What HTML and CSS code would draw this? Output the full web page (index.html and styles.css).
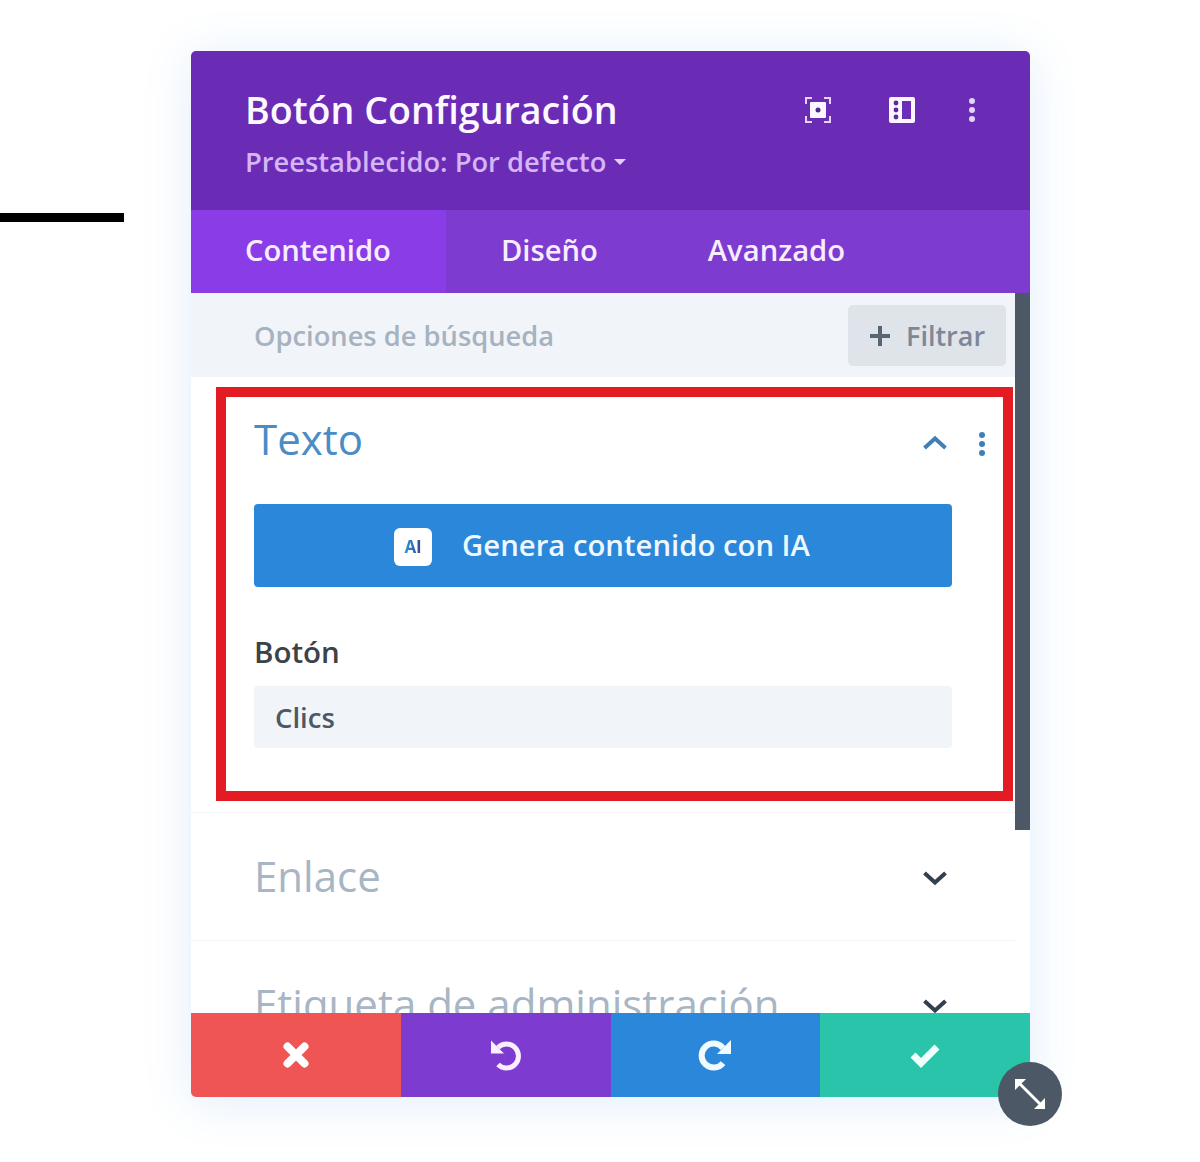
FILE: index.html
```html
<!DOCTYPE html>
<html lang="es">
<head>
    <meta charset="UTF-8">
    <meta name="viewport" content="width=device-width, initial-scale=1.0">
    <title>Botón Configuración</title>
    <link rel="stylesheet" href="styles.css">
</head>
<body>
    <div class="page">
        <div class="rule"></div>
        <div class="panel">
            <div class="panel-header">
                <div class="panel-titles">
                    <h2>Botón Configuración</h2>
                    <div class="preset">Preestablecido: Por defecto <span class="caret"></span></div>
                </div>
                <div class="header-icons">
                    <svg class="icon-focus" width="28" height="28" viewBox="0 0 28 28">
                        <path d="M2 8V2h6M20 2h6v6M26 20v6h-6M8 26H2v-6" fill="none" stroke="#e6d2fa" stroke-width="2"/>
                        <rect x="6" y="6" width="16" height="16" rx="1" fill="#fbf6ff"/>
                        <circle cx="14" cy="14" r="2.500" fill="#4d2a86"/>
                    </svg>
                    <svg class="icon-layout" width="26" height="26" viewBox="0 0 26 26">
                        <rect width="26" height="26" rx="2" fill="#fbf6ff"/>
                        <circle cx="7" cy="6" r="2.400" fill="#5b2a99"/>
                        <circle cx="7" cy="13" r="2.400" fill="#5b2a99"/>
                        <circle cx="7" cy="20" r="2.400" fill="#5b2a99"/>
                        <rect x="13" y="4" width="9" height="18" fill="#6c2eb9"/>
                    </svg>
                    <svg class="icon-dots" width="8" height="26" viewBox="0 0 8 26">
                        <circle cx="4" cy="4" r="3" fill="#e6d2fa"/>
                        <circle cx="4" cy="13" r="3" fill="#e6d2fa"/>
                        <circle cx="4" cy="22" r="3" fill="#e6d2fa"/>
                    </svg>
                </div>
            </div>

            <div class="tabs">
                <div class="tab active">Contenido</div>
                <div class="tab">Diseño</div>
                <div class="tab">Avanzado</div>
            </div>

            <div class="panel-body">
                <div class="search-row">
                    <span class="search-text">Opciones de búsqueda</span>
                    <div class="filter-btn"><span class="plus"></span>Filtrar</div>
                </div>

                <div class="section section-open">
                    <div class="section-head">
                        <h3 class="open">Texto</h3>
                        <svg class="chevron" width="26" height="16" viewBox="0 0 26 16">
                            <path d="M2.500 13L13 3.500 23.500 13" fill="none" stroke="#3f7fb5" stroke-width="4"/>
                        </svg>
                        <svg class="section-dots" width="8" height="26" viewBox="0 0 8 26">
                            <circle cx="4" cy="4" r="3" fill="#3f7fb5"/>
                            <circle cx="4" cy="13" r="3" fill="#3f7fb5"/>
                            <circle cx="4" cy="22" r="3" fill="#3f7fb5"/>
                        </svg>
                    </div>
                    <div class="ai-btn">
                        <span class="ai-badge"><span class="ai-mark">AI</span></span>
                        <span class="ai-text">Genera contenido con IA</span>
                    </div>
                    <label class="field-label">Botón</label>
                    <div class="field-input">Clics</div>
                </div>

                <div class="section">
                    <div class="section-head">
                        <h3>Enlace</h3>
                        <svg class="chevron" width="26" height="16" viewBox="0 0 26 16">
                            <path d="M2.500 3L13 12.500 23.500 3" fill="none" stroke="#333f4d" stroke-width="4"/>
                        </svg>
                    </div>
                </div>

                <div class="section">
                    <div class="section-head">
                        <h3>Etiqueta de administración</h3>
                        <svg class="chevron" width="26" height="16" viewBox="0 0 26 16">
                            <path d="M2.500 3L13 12.500 23.500 3" fill="none" stroke="#333f4d" stroke-width="4"/>
                        </svg>
                    </div>
                </div>

                <div class="scrollbar"></div>
                <div class="highlight"></div>
            </div>

            <div class="panel-footer">
                <div class="foot-btn foot-cancel">
                    <svg width="28" height="28" viewBox="0 0 28 28">
                        <path d="M5.500 5.500l17 17M22.500 5.500l-17 17" fill="none" stroke="#fff" stroke-width="8" stroke-linecap="round"/>
                    </svg>
                </div>
                <div class="foot-btn foot-undo">
                    <svg width="34" height="34" viewBox="0 0 34 34">
                        <path d="M9 9.500A12 12 0 1 1 9 26.500" fill="none" stroke="#fbeeff" stroke-width="5"/>
                        <path d="M2 2.500L2 15.500 15 15.500z" fill="#fbeeff"/>
                    </svg>
                </div>
                <div class="foot-btn foot-redo">
                    <svg width="34" height="34" viewBox="0 0 34 34">
                        <path d="M25 10A12 12 0 1 0 25 25" fill="none" stroke="#f0faff" stroke-width="6"/>
                        <path d="M33 2L33 16 19 16z" fill="#f0faff"/>
                    </svg>
                </div>
                <div class="foot-btn foot-save">
                    <svg width="32" height="26" viewBox="0 0 32 26">
                        <path d="M4 13l8 8L28 5" fill="none" stroke="#f0fffb" stroke-width="7"/>
                    </svg>
                </div>
            </div>

            <div class="resize-handle">
                <svg width="36" height="36" viewBox="0 0 36 36">
                    <path d="M8 8l20 20" stroke="#fff" stroke-width="3"/>
                    <path d="M3 3h11L3 14zM33 33H22l11-11z" fill="#fff"/>
                </svg>
            </div>
        </div>
    </div>
</body>
</html>
```

FILE: styles.css
```css
body {
    font-family: "Open Sans", sans-serif;
    background-color: #ffffff;
    margin: 0;
}
.page {
    display: flex;
    align-items: flex-start;
    padding-top: 51px;
    height: 1111px;
    overflow: hidden;
}
.rule {
    flex: none;
    width: 124px;
    height: 9px;
    margin-top: 162px;
    background-color: #000000;
}
.panel {
    position: relative;
    flex: none;
    width: 839px;
    height: 1046px;
    margin-left: 67px;
    border-radius: 5px;
    box-shadow: 0px 5px 50px rgba(43, 135, 218, 0.14);
    display: flex;
    flex-direction: column;
}
.panel-header {
    height: 159px;
    flex: none;
    box-sizing: border-box;
    padding: 36px 54px 0 54px;
    display: flex;
    justify-content: space-between;
    background-color: #6a2cb5;
    border-radius: 5px 5px 0 0;
}
h2 {
    margin: 0;
    color: #fdf8ff;
    font-size: 37.600px;
    font-weight: 600;
    line-height: 46px;
}
.preset {
    margin-top: 12px;
    color: #d5b5f5;
    font-size: 27.300px;
    font-weight: 600;
    line-height: 34px;
    display: flex;
    align-items: center;
    gap: 8px;
}
.caret {
    width: 0;
    height: 0;
    border-left: 6px solid transparent;
    border-right: 6px solid transparent;
    border-top: 6px solid #e3cdf9;
}
.header-icons {
    display: flex;
    align-items: center;
    height: 46px;
}
.icon-layout {
    margin-left: 57px;
}
.icon-dots {
    margin-left: 53px;
}
.tabs {
    height: 83px;
    flex: none;
    display: flex;
    background-color: #7e3bd0;
}
.tab {
    padding: 0 55px;
    color: #f7edff;
    font-size: 29.200px;
    font-weight: 600;
    line-height: 81px;
}
.tab.active {
    padding-left: 54px;
    background-color: #8a3de6;
}
.panel-body {
    position: relative;
    height: 720px;
    flex: none;
    overflow: hidden;
    background-color: #ffffff;
}
.search-row {
    height: 84px;
    box-sizing: border-box;
    padding: 12px 24px 0 63px;
    margin-right: 15px;
    display: flex;
    justify-content: space-between;
    align-items: flex-start;
    background-color: #f1f5f9;
}
.search-text {
    color: #a7b2c0;
    font-size: 27.300px;
    font-weight: 600;
    line-height: 62px;
}
.filter-btn {
    width: 158px;
    height: 61px;
    box-sizing: border-box;
    padding-left: 22px;
    margin-right: -15px;
    display: flex;
    align-items: center;
    gap: 16px;
    background-color: #dfe4ea;
    border-radius: 5px;
    color: #7c8896;
    font-size: 27px;
    font-weight: 600;
}
.plus {
    position: relative;
    width: 20px;
    height: 4px;
    background-color: #5a6572;
}
.plus::after {
    content: "";
    position: absolute;
    left: 8px;
    top: -8px;
    width: 4px;
    height: 20px;
    background-color: #5a6572;
}
.section {
    height: 128px;
    box-sizing: border-box;
    padding: 0 15px 0 63px;
    margin-right: 15px;
    border-bottom: 1px solid #f1f3f6;
}
.section-open {
    height: 436px;
    position: relative;
}
.section-head {
    height: 127px;
    display: flex;
    align-items: center;
    justify-content: space-between;
    padding-right: 52px;
}
.section-head h3 {
    margin-bottom: 2px;
}
.section-head .chevron {
    margin-top: 2px;
}
.section-open .section-head {
    height: 123px;
    margin-bottom: 4px;
}
.section-open .section-head h3 {
    margin-bottom: 0;
}
.section-open .section-head .chevron {
    margin-top: 8px;
}
h3 {
    margin: 0;
    color: #a7b5c4;
    font-size: 42px;
    font-weight: 400;
    white-space: nowrap;
}
h3.open {
    color: #4a8cc4;
}
.section-dots {
    position: absolute;
    right: 29px;
    top: 54px;
}
.ai-btn {
    width: 698px;
    height: 83px;
    display: flex;
    align-items: center;
    justify-content: center;
    gap: 30px;
    background-color: #2b87da;
    border-radius: 4px;
    color: #eef8ff;
    font-size: 29.300px;
    font-weight: 600;
}
.ai-text {
    margin-bottom: 2px;
    margin-right: 2px;
}
.ai-badge {
    width: 38px;
    height: 38px;
    margin-top: 2px;
    display: flex;
    align-items: center;
    justify-content: center;
    background-color: #ffffff;
    border-radius: 6px;
}
.ai-mark {
    font-size: 17px;
    font-weight: 700;
    background: linear-gradient(90deg, #2b9bd8, #3a3f8f);
    -webkit-background-clip: text;
    background-clip: text;
    color: transparent;
}
.field-label {
    display: block;
    margin-top: 46px;
    color: #3d4249;
    font-size: 29.500px;
    font-weight: 600;
    line-height: 38px;
}
.field-input {
    width: 698px;
    height: 62px;
    margin-top: 15px;
    box-sizing: border-box;
    padding-left: 21px;
    background-color: #f1f5f9;
    border-radius: 4px;
    color: #4c5866;
    font-size: 27.500px;
    font-weight: 600;
    line-height: 64px;
}
.scrollbar {
    position: absolute;
    top: 0;
    right: 0;
    width: 15px;
    height: 537px;
    background-color: #4c5866;
}
.highlight {
    position: absolute;
    top: 94px;
    left: 25px;
    width: 797px;
    height: 414px;
    box-sizing: border-box;
    border: 10px solid #e31b23;
}
.panel-footer {
    height: 84px;
    flex: none;
    display: flex;
    border-radius: 0 0 5px 5px;
    overflow: hidden;
}
.foot-btn {
    flex: 1;
    display: flex;
    align-items: center;
    justify-content: center;
}
.foot-cancel {
    background-color: #ef5555;
}
.foot-undo {
    background-color: #7e3bd0;
}
.foot-redo {
    background-color: #2b87da;
}
.foot-save {
    background-color: #29c4a9;
}
.resize-handle {
    position: absolute;
    right: -32px;
    bottom: -29px;
    width: 64px;
    height: 64px;
    display: flex;
    align-items: center;
    justify-content: center;
    background-color: #4c5866;
    border-radius: 50%;
}
```
